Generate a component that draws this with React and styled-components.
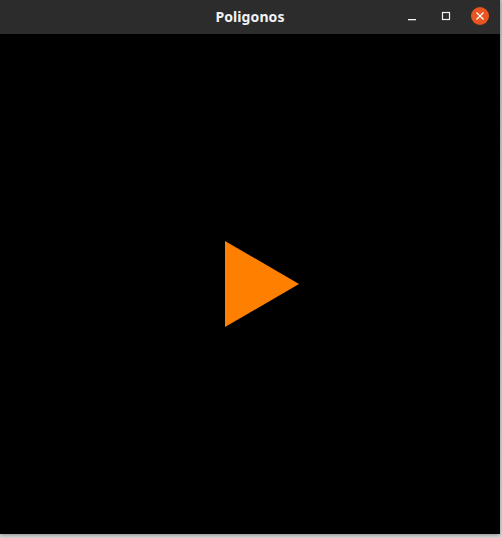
import React from "react";
import styled, { createGlobalStyle } from "styled-components";

const Global = createGlobalStyle`
  html, body { margin: 0; padding: 0; background: #d4d4d4; }
  body { width: 502px; height: 538px; overflow: hidden; }
`;

const Desk = styled.div`
  width: 502px;
  height: 538px;
  background: linear-gradient(#c8c8c8, #d8d8d8);
`;

const Window = styled.div`
  width: 500px;
  height: 534px;
  display: flex;
  flex-direction: column;
  box-shadow: 0 1px 4px rgba(0, 0, 0, 0.35);
`;

const TitleBar = styled.div`
  height: 34px;
  flex: none;
  background: #2c2c2c;
  display: grid;
  grid-template-columns: 1fr auto 1fr;
  align-items: center;
`;

const Title = styled.div`
  grid-column: 2;
  color: #f2f2f2;
  font-family: "Noto Sans", "DejaVu Sans", sans-serif;
  font-weight: 700;
  font-size: 14px;
  line-height: 1;
  letter-spacing: 0.1px;
  padding-bottom: 1px;
`;

const Controls = styled.div`
  grid-column: 3;
  justify-self: end;
  display: flex;
  align-items: center;
  padding-right: 11px;
  height: 100%;
`;

const CtrlButton = styled.div`
  width: ${(p) => p.$w}px;
  height: 18px;
  margin-left: ${(p) => p.$ml}px;
  display: flex;
  align-items: center;
  justify-content: center;
  border-radius: 50%;
  background: ${(p) => p.$bg || "transparent"};
  margin-top: -3px;
`;

const Canvas = styled.div`
  flex: 1;
  background: #000;
  display: flex;
  align-items: center;
  justify-content: center;
`;

export default function App() {
  return (
    <Desk>
      <Global />
      <Window>
        <TitleBar>
          <Title>Poligonos</Title>
          <Controls>
            <CtrlButton $w={10} $ml={0}>
              <svg width="10" height="18" viewBox="0 0 10 18">
                <rect x="1" y="12" width="8" height="1.3" fill="#f2f2f2" />
              </svg>
            </CtrlButton>
            <CtrlButton $w={10} $ml={24}>
              <svg width="10" height="10" viewBox="0 0 10 10" style={{ marginTop: 0 }}>
                <rect x="1.5" y="1.5" width="7" height="7" fill="none" stroke="#f2f2f2" strokeWidth="1.2" />
              </svg>
            </CtrlButton>
            <CtrlButton $w={18} $ml={20} $bg="#e95420">
              <svg width="10" height="10" viewBox="0 0 10 10">
                <path d="M1.5 1.5 L8.5 8.5 M8.5 1.5 L1.5 8.5" stroke="#fff" strokeWidth="1.4" />
              </svg>
            </CtrlButton>
          </Controls>
        </TitleBar>
        <Canvas>
          <svg width="500" height="500" viewBox="0 0 500 500">
            <polygon points="225,207 225,293 299,250" fill="#ff8000" />
          </svg>
        </Canvas>
      </Window>
    </Desk>
  );
}
